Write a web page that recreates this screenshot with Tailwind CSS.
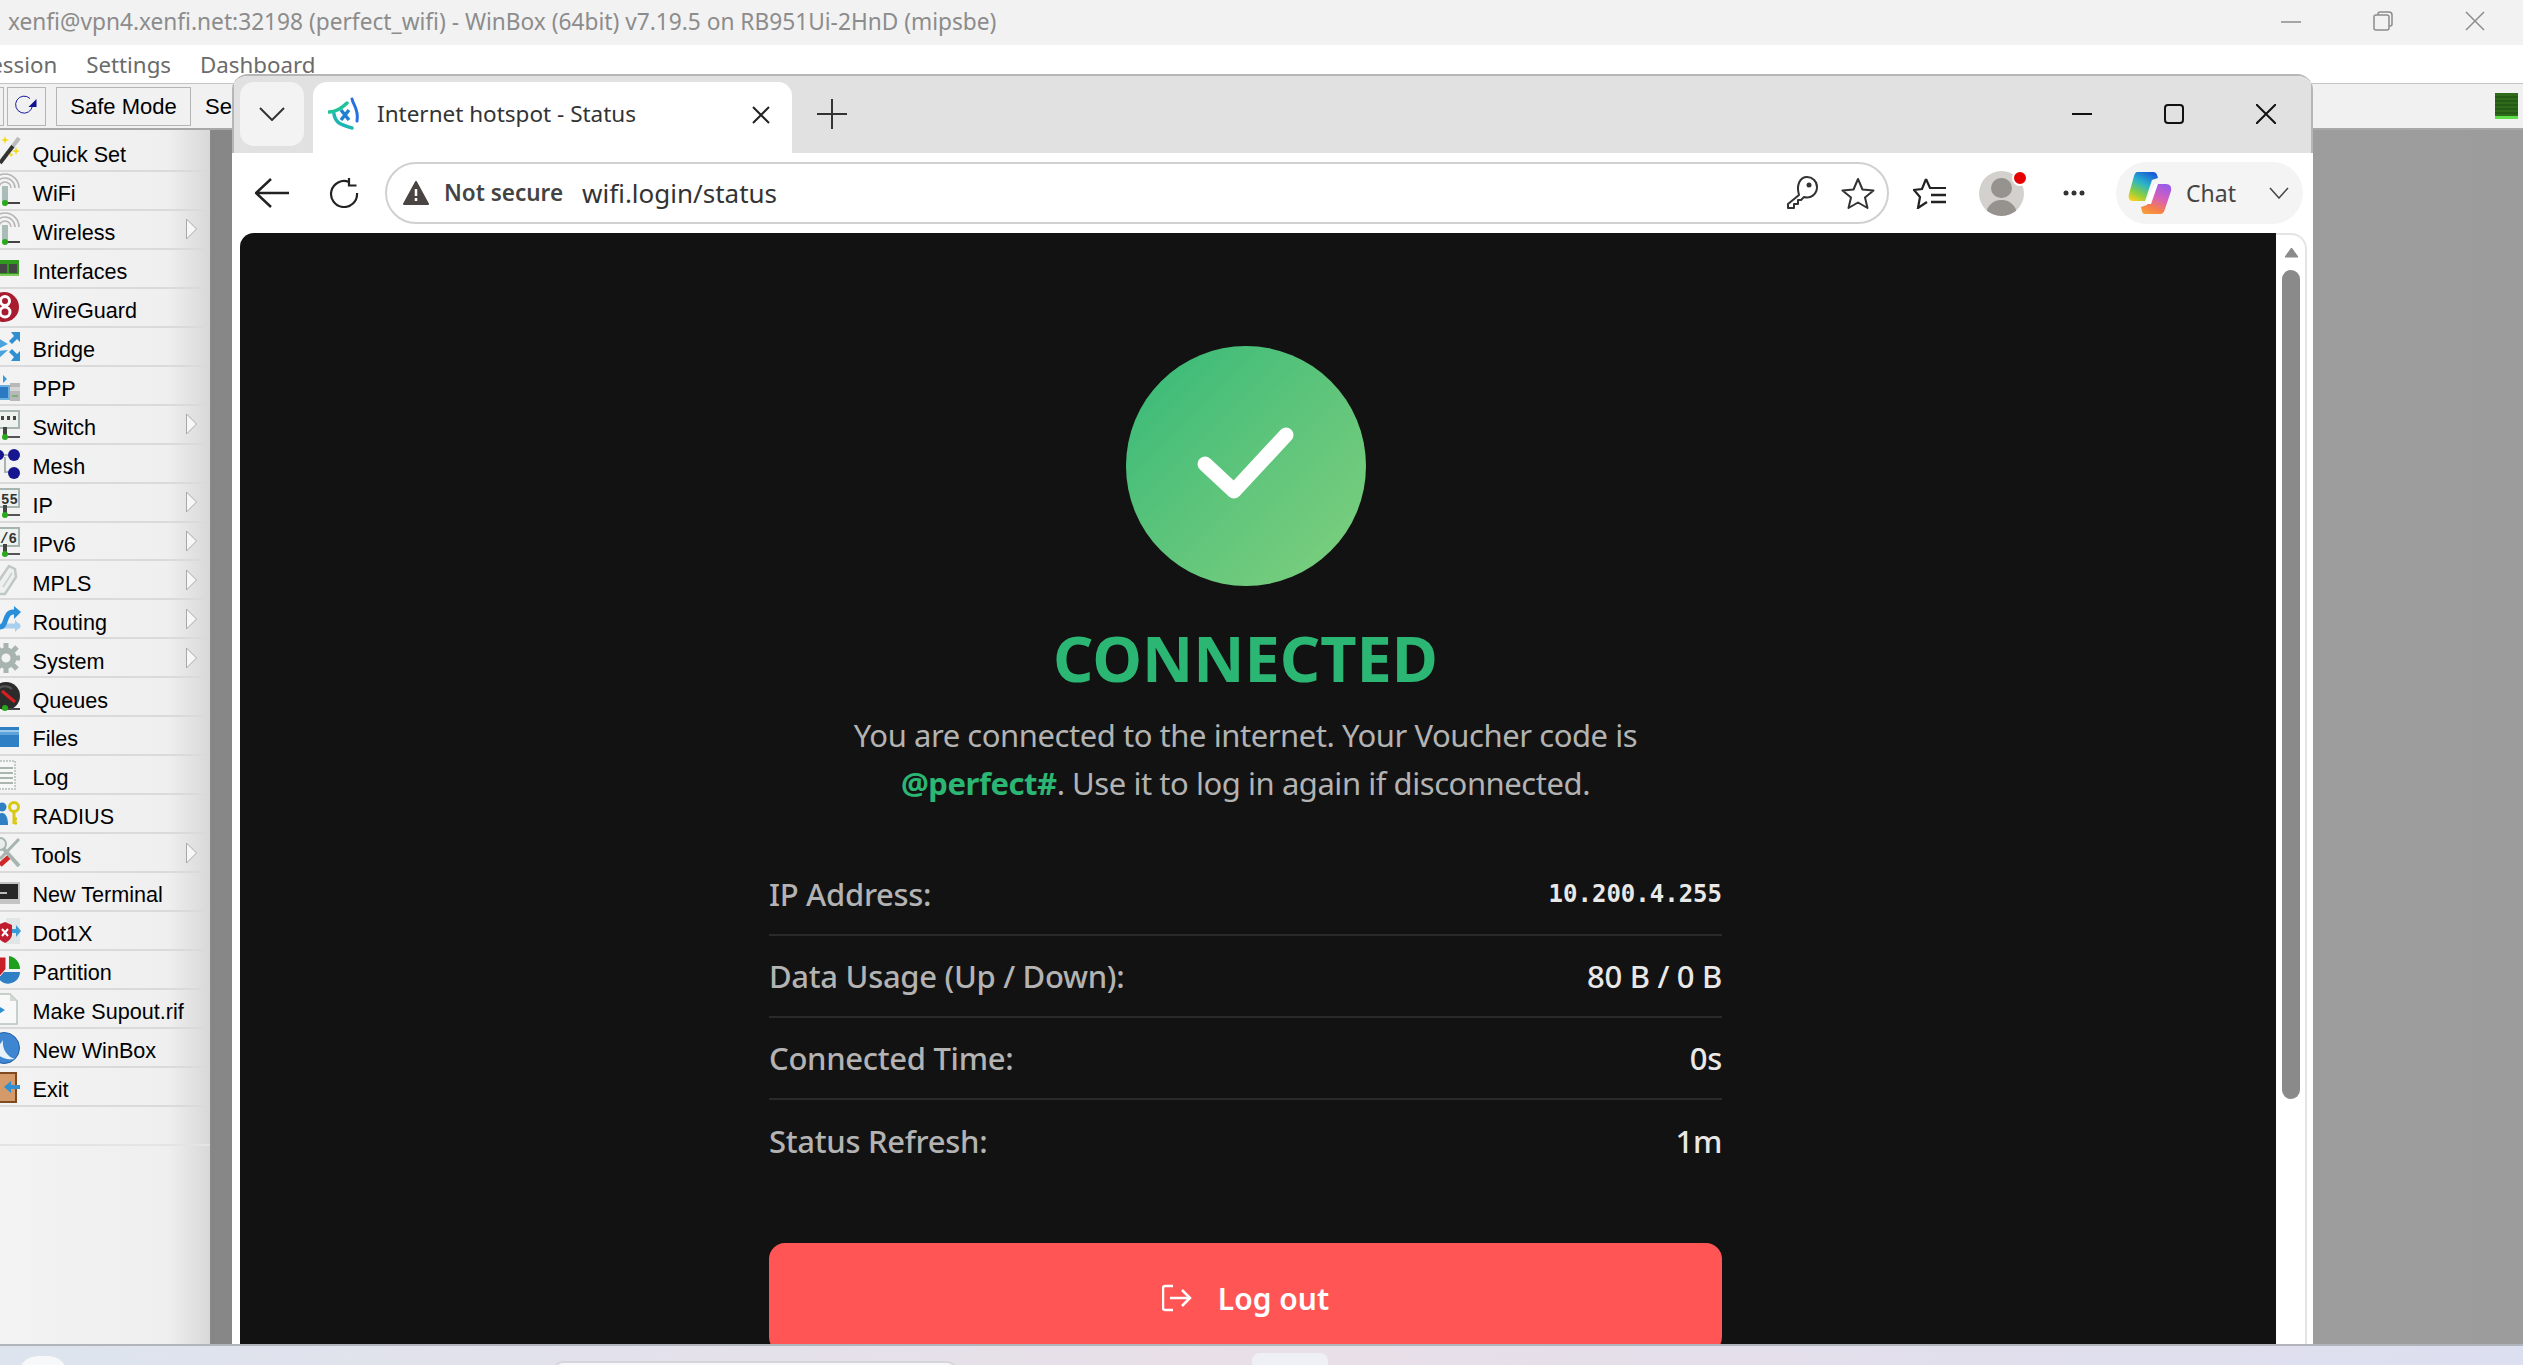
<!DOCTYPE html>
<html lang="en">
<head>
<meta charset="UTF-8">
<title>WinBox - Internet hotspot</title>
<script src="https://cdn.jsdelivr.net/npm/@tailwindcss/browser@4"></script>
</head>
<body class="relative h-[1365px] w-[2523px] overflow-hidden bg-[#dfe3ee] font-['Liberation_Sans',sans-serif]">

<svg class="hidden">
  <symbol id="sub" viewBox="0 0 11 22"><path d="M.5 1 10.5 11 .5 21Z" fill="#f7f7f7" stroke="#a8a8a8"/></symbol>
  <symbol id="stem" viewBox="0 0 22 39"><path d="M5 32H20" stroke="#555" stroke-width="2"/><path d="M3 22h4v9H3z" fill="#444"/><circle cx="5" cy="32" r="3" fill="#2aa81c"/></symbol>
</svg>

<!-- winbox window -->
<div class="flex h-[1344px] flex-col">
  <div class="flex h-[45px] items-center justify-between bg-[#f2f2f2] pl-[8px] font-['Noto_Sans',sans-serif] text-[22.7px] text-[#8c8c8c]">
    <span>xenfi@vpn4.xenfi.net:32198 (perfect_wifi) - WinBox (64bit) v7.19.5 on RB951Ui-2HnD (mipsbe)</span>
    <div class="-mt-[3px] flex items-center gap-[72px] pr-[38px]">
      <svg width="20" height="20" viewBox="0 0 20 20"><path d="M0 11H20" stroke="#8c8c8c" stroke-width="1.5"/></svg>
      <svg width="20" height="20" viewBox="0 0 20 20" fill="none" stroke="#8c8c8c" stroke-width="1.5"><rect x="1" y="4" width="15" height="15" rx="2"/><path d="M5 4V3a2 2 0 0 1 2-2h9a3 3 0 0 1 3 3v9a2 2 0 0 1-2 2h-1"/></svg>
      <svg width="20" height="20" viewBox="0 0 20 20"><path d="M1 1 19 19M19 1 1 19" stroke="#8c8c8c" stroke-width="1.5"/></svg>
    </div>
  </div>
  <div class="flex h-[39px] items-center gap-[29px] overflow-hidden border-b border-[#c4c4c4] bg-white pt-[2px] font-['Noto_Sans',sans-serif] text-[22.3px] text-[#6b6b6b]">
    <span class="-ml-[22px]">Session</span><span>Settings</span><span>Dashboard</span>
  </div>
  <div class="flex h-[46px] items-center justify-between border-b-2 border-[#a8a8a8] bg-[#f1f1f1] pr-[5px] text-[22px] text-black">
    <div class="flex items-center">
      <div class="h-[39px] w-[4px] border border-l-0 border-[#b5b5b5]"></div>
      <div class="ml-[3px] flex h-[39px] w-[39px] items-center justify-center border border-[#b5b5b5]">
        <svg width="24" height="24" viewBox="0 0 24 24"><path d="M15 4.500A8.500 8.500 0 1 0 17.500 12" fill="none" stroke="#1a1aa0" stroke-width="1"/><path d="M21.500 5V13H13.500Z" fill="#101090"/></svg>
      </div>
      <div class="ml-[10px] flex h-[39px] w-[135px] items-center justify-center border border-[#b5b5b5]">Safe Mode</div>
      <span class="ml-[14px]">Se</span>
    </div>
    <svg width="23" height="26" viewBox="0 0 23 26"><rect width="23" height="26" fill="#2f6a1a"/><path d="M0 4H23M0 8H23M0 12H23M0 16H23M0 20H23" stroke="#1d4a10"/><rect y="23" width="23" height="3" fill="#5fe04a"/></svg>
  </div>
  <div class="flex min-h-0 flex-1">
    <div class="h-full w-[211px] shrink-0 border-r border-[#8a8a8a] bg-linear-to-r from-[#f3f3f3] via-[#efefef] via-80% to-[#d8d8d8] pt-[3px] text-[21.6px] leading-none text-black">

      <div class="flex h-[38.96px] items-center border-b-2 border-[#dadada] pr-[13px]">
        <svg class="shrink-0" width="22" height="39" viewBox="0 0 22 39"><path d="M0 31 13 14" stroke="#333" stroke-width="4"/><path d="M13 14 19 6" stroke="#bbb" stroke-width="4"/><path d="M5 4l1 3 3 1-3 1-1 3-1-3-3-1 3-1zM16 15l1 3 3 1-3 1-1 3-1-3-3-1 3-1zM11 20l.7 2 2 .7-2 .7-.7 2-.7-2-2-.7 2-.7z" fill="#f2d90c"/></svg>
        <span class="ml-[10.5px] pt-[7px]">Quick Set</span>
      </div>
      <div class="flex h-[38.96px] items-center border-b-2 border-[#dadada] pr-[13px]">
        <svg class="shrink-0" width="22" height="39" viewBox="0 0 22 39"><g fill="none" stroke="#b5b5b5" stroke-width="1.5"><path d="M-1 17A6 6 0 0 1 11 17"/><path d="M-5 17A10 10 0 0 1 15 17"/><path d="M-9 17A14 14 0 0 1 19 17"/></g><path d="M2 15h6v16H2z" fill="#a8bdb8"/><path d="M5 32H20" stroke="#444" stroke-width="2"/><circle cx="5" cy="32" r="3" fill="#2aa81c"/></svg>
        <span class="ml-[10.5px] pt-[7px]">WiFi</span>
      </div>
      <div class="flex h-[38.96px] items-center border-b-2 border-[#dadada] pr-[13px]">
        <svg class="shrink-0" width="22" height="39" viewBox="0 0 22 39"><g fill="none" stroke="#b5b5b5" stroke-width="1.5"><path d="M-1 17A6 6 0 0 1 11 17"/><path d="M-5 17A10 10 0 0 1 15 17"/><path d="M-9 17A14 14 0 0 1 19 17"/></g><path d="M2 15h6v16H2z" fill="#a8bdb8"/><path d="M5 32H20" stroke="#444" stroke-width="2"/><circle cx="5" cy="32" r="3" fill="#2aa81c"/></svg>
        <span class="ml-[10.5px] pt-[7px]">Wireless</span>
        <svg class="ml-auto" width="11" height="22"><use href="#sub"/></svg>
      </div>
      <div class="flex h-[38.96px] items-center border-b-2 border-[#dadada] pr-[13px]">
        <svg class="shrink-0" width="22" height="39" viewBox="0 0 22 39"><rect x="-2" y="11" width="21" height="16" fill="#2f9a1e"/><rect x="-2" y="15" width="9" height="9" fill="#444"/><rect x="9" y="15" width="8" height="9" fill="#444"/><rect x="-2" y="25" width="21" height="2" fill="#7fc860"/></svg>
        <span class="ml-[10.5px] pt-[7px]">Interfaces</span>
      </div>
      <div class="flex h-[38.96px] items-center border-b-2 border-[#dadada] pr-[13px]">
        <svg class="shrink-0" width="22" height="39" viewBox="0 0 22 39"><circle cx="4" cy="19" r="15" fill="#a81c30"/><g fill="none" stroke="#fff" stroke-width="3"><circle cx="5" cy="13" r="4.5"/><circle cx="5" cy="24" r="5"/></g></svg>
        <span class="ml-[10.5px] pt-[7px]">WireGuard</span>
      </div>
      <div class="flex h-[38.96px] items-center border-b-2 border-[#dadada] pr-[13px]">
        <svg class="shrink-0" width="22" height="39" viewBox="0 0 22 39"><path d="M20 5v10l-3-3-5 5-3-3 5-5-3-4zM20 34V24l-3 3-5-5-3 3 5 5-3 4z" fill="#2f8fd0"/><path d="M-2 11 8 17 -2 22zM-2 24 8 23 -2 32z" fill="#4aa3dc"/></svg>
        <span class="ml-[10.5px] pt-[7px]">Bridge</span>
      </div>
      <div class="flex h-[38.96px] items-center border-b-2 border-[#dadada] pr-[13px]">
        <svg class="shrink-0" width="22" height="39" viewBox="0 0 22 39"><path d="M3 9 7 13 3 17z" fill="#3a9ad8"/><rect x="10" y="17" width="10" height="18" fill="#b8b8b8"/><rect x="10" y="21" width="10" height="4" fill="#d6d6d6"/><path d="M12 30h6" stroke="#3aa83a"/><rect x="-3" y="20" width="12" height="13" fill="#2b79c2" stroke="#6db0e0" stroke-width="2"/></svg>
        <span class="ml-[10.5px] pt-[7px]">PPP</span>
      </div>
      <div class="flex h-[38.96px] items-center border-b-2 border-[#dadada] pr-[13px]">
        <svg class="shrink-0" width="22" height="39" viewBox="0 0 22 39"><rect x="-3" y="6" width="22" height="17" fill="#eef2ee" stroke="#a6b5b0" stroke-width="2"/><path d="M1 11h3v4H1zM7 11h3v4H7zM13 11h3v4h-3z" fill="#444"/><use href="#stem" width="22" height="39"/></svg>
        <span class="ml-[10.5px] pt-[7px]">Switch</span>
        <svg class="ml-auto" width="11" height="22"><use href="#sub"/></svg>
      </div>
      <div class="flex h-[38.96px] items-center border-b-2 border-[#dadada] pr-[13px]">
        <svg class="shrink-0" width="22" height="39" viewBox="0 0 22 39"><path d="M0 11H8M5 13V28H9" fill="none" stroke="#a6b5b0" stroke-width="2"/><circle cx="-1" cy="11" r="5" fill="#161690"/><circle cx="14" cy="11" r="6" fill="#161690"/><circle cx="14" cy="29" r="6" fill="#161690"/></svg>
        <span class="ml-[10.5px] pt-[7px]">Mesh</span>
      </div>
      <div class="flex h-[38.96px] items-center border-b-2 border-[#dadada] pr-[13px]">
        <svg class="shrink-0" width="22" height="39" viewBox="0 0 22 39"><rect x="-3" y="6" width="22" height="18" fill="#eef2ee" stroke="#a6b5b0" stroke-width="2"/><text x="1" y="21" font-family="Liberation Mono" font-size="14" font-weight="700" fill="#333">55</text><use href="#stem" width="22" height="39"/></svg>
        <span class="ml-[10.5px] pt-[7px]">IP</span>
        <svg class="ml-auto" width="11" height="22"><use href="#sub"/></svg>
      </div>
      <div class="flex h-[38.96px] items-center border-b-2 border-[#dadada] pr-[13px]">
        <svg class="shrink-0" width="22" height="39" viewBox="0 0 22 39"><rect x="-3" y="6" width="22" height="18" fill="#eef2ee" stroke="#a6b5b0" stroke-width="2"/><text x="0" y="21" font-family="Liberation Mono" font-size="14" font-weight="700" fill="#333">/6</text><use href="#stem" width="22" height="39"/></svg>
        <span class="ml-[10.5px] pt-[7px]">IPv6</span>
        <svg class="ml-auto" width="11" height="22"><use href="#sub"/></svg>
      </div>
      <div class="flex h-[38.96px] items-center border-b-2 border-[#dadada] pr-[13px]">
        <svg class="shrink-0" width="22" height="39" viewBox="0 0 22 39"><path d="M9 6 15 9 16 17 5 34-3 34-6 28Z" fill="#eef0ef" stroke="#c0c8c4" stroke-width="2.500"/><path d="M3 27 12 13" stroke="#c8cfcc" stroke-width="1.5"/></svg>
        <span class="ml-[10.5px] pt-[7px]">MPLS</span>
        <svg class="ml-auto" width="11" height="22"><use href="#sub"/></svg>
      </div>
      <div class="flex h-[38.96px] items-center border-b-2 border-[#dadada] pr-[13px]">
        <svg class="shrink-0" width="22" height="39" viewBox="0 0 22 39"><path d="M0 27H9L20 27" fill="none" stroke="#a8d0ee" stroke-width="5"/><path d="M15 21l6 6-6 6z" fill="#a8d0ee"/><path d="M0 28C7 28 4 13 13 13h3" fill="none" stroke="#2b8ed8" stroke-width="5"/><path d="M14 7l7 6-7 7z" fill="#2b8ed8"/></svg>
        <span class="ml-[10.5px] pt-[7px]">Routing</span>
        <svg class="ml-auto" width="11" height="22"><use href="#sub"/></svg>
      </div>
      <div class="flex h-[38.96px] items-center border-b-2 border-[#dadada] pr-[13px]">
        <svg class="shrink-0" width="22" height="39" viewBox="0 0 22 39"><circle cx="6" cy="20" r="7.5" fill="none" stroke="#a8b4b0" stroke-width="6"/><path d="M6 5V10M6 30V35M-9 20H-4M16 20H20M17 9 13 13M17 31 13 27M-3 9 0 13M-3 31 0 27" stroke="#a8b4b0" stroke-width="5"/></svg>
        <span class="ml-[10.5px] pt-[7px]">System</span>
        <svg class="ml-auto" width="11" height="22"><use href="#sub"/></svg>
      </div>
      <div class="flex h-[38.96px] items-center border-b-2 border-[#dadada] pr-[13px]">
        <svg class="shrink-0" width="22" height="39" viewBox="0 0 22 39"><circle cx="6" cy="19" r="14" fill="#2b2b2b"/><path d="M2 14 15 25" stroke="#d81e1e" stroke-width="3"/><path d="M-2 12a10 10 0 0 1 14 0" fill="none" stroke="#555" stroke-width="2"/><path d="M5 32H20" stroke="#444" stroke-width="2"/><circle cx="5" cy="31" r="3" fill="#2aa81c"/></svg>
        <span class="ml-[10.5px] pt-[7px]">Queues</span>
      </div>
      <div class="flex h-[38.96px] items-center border-b-2 border-[#dadada] pr-[13px]">
        <svg class="shrink-0" width="22" height="39" viewBox="0 0 22 39"><path d="M-2 11h21v20H-2z" fill="#2f7fc4"/><path d="M-2 14h21v2H-2z" fill="#9cc9ea"/><path d="M-2 16h21v3H-2z" fill="#5ea4dc"/></svg>
        <span class="ml-[10.5px] pt-[7px]">Files</span>
      </div>
      <div class="flex h-[38.96px] items-center border-b-2 border-[#dadada] pr-[13px]">
        <svg class="shrink-0" width="22" height="39" viewBox="0 0 22 39"><rect x="-3" y="6" width="18" height="28" fill="#f6f7f6" stroke="#c2cbc6" stroke-width="2" stroke-dasharray="2 1"/><path d="M0 13H13M0 18H13M0 23H13M0 28H13" stroke="#aab5b0" stroke-width="2"/></svg>
        <span class="ml-[10.5px] pt-[7px]">Log</span>
      </div>
      <div class="flex h-[38.96px] items-center border-b-2 border-[#dadada] pr-[13px]">
        <svg class="shrink-0" width="22" height="39" viewBox="0 0 22 39"><circle cx="2" cy="13" r="4.5" fill="#2f7fc4"/><path d="M-4 31c0-9 3-12 6-12s6 3 6 12z" fill="#2f7fc4"/><circle cx="14" cy="13" r="4.5" fill="none" stroke="#d8c814" stroke-width="3"/><path d="M14 17V30M14 25h3M14 29h3" stroke="#d8c814" stroke-width="3"/></svg>
        <span class="ml-[10.5px] pt-[7px]">RADIUS</span>
      </div>
      <div class="flex h-[38.96px] items-center border-b-2 border-[#dadada] pr-[13px]">
        <svg class="shrink-0" width="22" height="39" viewBox="0 0 22 39"><path d="M19 6 0 26" stroke="#a8b4b0" stroke-width="3"/><path d="M10 23 0 32" stroke="#d02828" stroke-width="5"/><path d="M2 14 19 33" stroke="#a8b4b0" stroke-width="4"/><circle cx="0" cy="11" r="6" fill="#e8eeee" stroke="#a8b4b0" stroke-width="2"/></svg>
        <span class="ml-[9px] pt-[7px]">Tools</span>
        <svg class="ml-auto" width="11" height="22"><use href="#sub"/></svg>
      </div>
      <div class="flex h-[38.96px] items-center border-b-2 border-[#dadada] pr-[13px]">
        <svg class="shrink-0" width="22" height="39" viewBox="0 0 22 39"><rect x="-2" y="10" width="22" height="22" fill="#c4c4c4"/><rect x="-2" y="12" width="20" height="15" fill="#262626"/><path d="M0 21H7" stroke="#eee" stroke-width="1.5"/></svg>
        <span class="ml-[10.5px] pt-[7px]">New Terminal</span>
      </div>
      <div class="flex h-[38.96px] items-center border-b-2 border-[#dadada] pr-[13px]">
        <svg class="shrink-0" width="22" height="39" viewBox="0 0 22 39"><rect x="6" y="7" width="14" height="26" fill="#e0e6e6"/><path d="M9 18h7v-4l5 6-5 6v-4H9z" fill="#3a9ad8"/><path d="M-3 14 5 11l7 3v9c0 4-3 7-7 9-4-2-8-5-8-9z" fill="#c01e30"/><path d="M2 18 8 25M8 18 2 25" stroke="#fff" stroke-width="2"/></svg>
        <span class="ml-[10.5px] pt-[7px]">Dot1X</span>
      </div>
      <div class="flex h-[38.96px] items-center border-b-2 border-[#dadada] pr-[13px]">
        <svg class="shrink-0" width="22" height="39" viewBox="0 0 22 39"><path d="M9 6a13 13 0 0 1 11 13H9z" fill="#1ea01e"/><path d="M-3 22H20A12 12 0 0 1 4 33 12 12 0 0 1-3 22z" fill="#2f7fc4"/><path d="M-3 7H6V19L0 26H-3z" fill="#c81e28" stroke="#f3f3f3"/></svg>
        <span class="ml-[10.5px] pt-[7px]">Partition</span>
      </div>
      <div class="flex h-[38.96px] items-center border-b-2 border-[#dadada] pr-[13px]">
        <svg class="shrink-0" width="22" height="39" viewBox="0 0 22 39"><path d="M-3 5H10L17 12V35H-3z" fill="#f8f8f8" stroke="#b6c2bc" stroke-width="1.5"/><path d="M10 5v7h7z" fill="#d2d9d5"/><path d="M-3 16 5 21-3 26z" fill="#2f8fd0"/></svg>
        <span class="ml-[10.5px] pt-[7px]">Make Supout.rif</span>
      </div>
      <div class="flex h-[38.96px] items-center border-b-2 border-[#dadada] pr-[13px]">
        <svg class="shrink-0" width="22" height="39" viewBox="0 0 22 39"><circle cx="4" cy="20" r="15.500" fill="#3f86d2" stroke="#2160a8" stroke-width="1"/><path d="M-8 22C0 30 8 32 15 31 6 28 2 20 3 12-1 18-4 22-8 22Z" fill="#e8f2fb"/></svg>
        <span class="ml-[10.5px] pt-[7px]">New WinBox</span>
      </div>
      <div class="flex h-[38.96px] items-center border-b-2 border-[#dadada] pr-[13px]">
        <svg class="shrink-0" width="22" height="39" viewBox="0 0 22 39"><rect x="-3" y="6" width="19" height="29" fill="#d49a6a" stroke="#7d4a22" stroke-width="2"/><path d="M20 18v4H11v-4zM11 14v12l-7-6z" fill="#2f8fd0"/></svg>
        <span class="ml-[10.5px] pt-[7px]">Exit</span>
      </div>
      <div class="h-[38.96px] border-b-2 border-[#e4e4e4]"></div>
    </div>
    <div class="flex-1 bg-linear-to-r from-[#868686] via-[#a0a0a0] via-[20%] to-[#9c9c9c]"></div>
  </div>
</div>

<!-- browser window on top of winbox -->
<div class="absolute left-[232px] top-[74px] flex h-[1270px] w-[2081px] flex-col overflow-hidden rounded-t-[16px] border-t-2 border-[#b6b6b6] bg-white font-['Noto_Sans',sans-serif]">
  <div class="flex h-[77px] shrink-0 items-end border-x-2 border-[#b6b6b6] bg-[#e1e1e1] pl-[6px]">
    <div class="mb-[7px] flex h-[64px] w-[64px] items-center justify-center rounded-[14px] bg-[#f3f3f3]">
      <svg width="26" height="14" viewBox="0 0 26 14"><path d="M1 1 13 13 25 1" fill="none" stroke="#333" stroke-width="2"/></svg>
    </div>
    <div class="ml-[9px] flex h-[71px] w-[479px] items-start rounded-t-[14px] bg-white pl-[15px] pr-[22px] pt-[15px]">
      <svg width="34" height="34" viewBox="0 0 34 34" fill="none"><path d="M1 15C6 15 13 12 19 6" stroke="#1fc49a" stroke-width="3.500" stroke-linecap="round"/><path d="M6 17C7 26 14 28 24 31" stroke="#1fb5b5" stroke-width="3.500" stroke-linecap="round"/><path d="M24 2C25 8 31 12 29 24" stroke="#2a6fe0" stroke-width="3" stroke-linecap="round"/><path d="M13 13 21 23M21 13 13 23" stroke="#1f7fd0" stroke-width="3.500"/></svg>
      <span class="ml-[15px] text-[22.5px] leading-[34px] text-[#333]">Internet hotspot - Status</span>
      <svg class="ml-auto mt-[9px]" width="18" height="18" viewBox="0 0 18 18"><path d="M1 1 17 17M17 1 1 17" stroke="#222" stroke-width="2"/></svg>
    </div>
    <svg class="mb-[24px] ml-[25px]" width="30" height="30" viewBox="0 0 30 30"><path d="M15 0V30M0 15H30" stroke="#333" stroke-width="2"/></svg>
    <div class="mb-[29px] ml-auto mr-[35px] flex items-center gap-[72px]">
      <svg width="20" height="20" viewBox="0 0 20 20"><path d="M0 10H20" stroke="#111" stroke-width="2"/></svg>
      <svg width="20" height="20" viewBox="0 0 20 20"><rect x="1" y="1" width="18" height="18" rx="3" fill="none" stroke="#111" stroke-width="2"/></svg>
      <svg width="20" height="20" viewBox="0 0 20 20"><path d="M0 0 20 20M20 0 0 20" stroke="#111" stroke-width="2"/></svg>
    </div>
  </div>
  <div class="flex h-[80px] shrink-0 items-center bg-white pl-[23px] pr-[10px]">
    <svg width="34" height="30" viewBox="0 0 34 30"><path d="M16 1 1 15 16 29M1 15H34" fill="none" stroke="#222" stroke-width="2.500"/></svg>
    <svg class="ml-[40px]" width="30" height="30" viewBox="0 0 30 30" fill="none"><path d="M20 4A13 13 0 1 0 28 15" stroke="#222" stroke-width="2.200"/><path d="M20 0V7.500H27.500" stroke="#222" stroke-width="2.200"/></svg>
    <div class="ml-[26px] flex h-[62px] w-[1504px] items-center rounded-full border-2 border-[#d0d0d0] pl-[16px] pr-[12px]">
      <svg width="26" height="24" viewBox="0 0 26 24"><path d="M13 1 25 23H1Z" fill="#4a4543" stroke="#4a4543" stroke-width="2" stroke-linejoin="round"/><path d="M13 8V15M13 17V20" stroke="#fff" stroke-width="2.500"/></svg>
      <span class="ml-[15px] text-[22.5px] font-semibold text-[#444]">Not secure</span>
      <span class="ml-[19px] text-[26px] text-[#333]">wifi.login/status</span>
      <svg class="ml-auto" width="34" height="34" viewBox="0 0 34 34" fill="none"><path d="M14 19 3 28V32H9V28H13V24H16L19 21C26 23 32 18 32 11 32 5 27 1 22 1 15 1 11 9 14 19Z" stroke="#333" stroke-width="2" stroke-linejoin="round"/><circle cx="24" cy="9" r="2.500" fill="#333"/></svg>
      <svg class="ml-[22px]" width="34" height="32" viewBox="0 0 34 32"><path d="M17 2 21.500 12.500 32.500 13.500 24 20.500 26.500 31 17 25.500 7.500 31 10 20.500 1.500 13.500 12.500 12.500Z" fill="none" stroke="#333" stroke-width="2" stroke-linejoin="round"/></svg>
    </div>
    <svg class="ml-[24px]" width="34" height="32" viewBox="0 0 34 32" fill="none" stroke="#222" stroke-width="2.200"><path d="M13 2 9 12 1 13 7 20 5 31 14 25"/><path d="M13 2 17 11 H33"/><path d="M18 18H33M18 25H33" stroke-width="2.500"/></svg>
    <div class="relative ml-[32px] h-[45px] w-[45px] overflow-hidden rounded-full bg-[#d3d1cd]">
      <div class="absolute left-[12px] top-[7px] h-[20px] w-[21px] rounded-full bg-[#96928e]"></div>
      <div class="absolute left-[7px] top-[29px] h-[30px] w-[31px] rounded-full bg-[#96928e]"></div>
    </div>
    <div class="relative -ml-[12px] -mt-[31px] h-[16px] w-[16px] rounded-full border-2 border-white bg-[#e60000]"></div>
    <svg class="ml-[35px]" width="22" height="6" viewBox="0 0 22 6"><circle cx="3" cy="3" r="2.500" fill="#333"/><circle cx="11" cy="3" r="2.500" fill="#333"/><circle cx="19" cy="3" r="2.500" fill="#333"/></svg>
    <div class="ml-[31px] flex h-[62px] w-[187px] items-center rounded-full bg-[#f4f4f4] pl-[12px] pr-[14px]">
      <svg width="44" height="42" viewBox="0 0 44 42">
        <defs>
          <linearGradient id="cpa" x1="0.700" y1="0" x2="0.200" y2="1"><stop offset="0" stop-color="#1a5fd8"/><stop offset=".4" stop-color="#2ab5c8"/><stop offset=".75" stop-color="#8ccf3c"/><stop offset="1" stop-color="#f5d020"/></linearGradient>
          <linearGradient id="cpb" x1="0.700" y1="0" x2="0.300" y2="1"><stop offset="0" stop-color="#9a5be8"/><stop offset=".45" stop-color="#d860b8"/><stop offset=".8" stop-color="#f5804a"/><stop offset="1" stop-color="#f79a3a"/></linearGradient>
        </defs>
        <path d="M9 0H25C28 0 29 2 30 6L24 8 17 29H5C1 29 0 26 1 22L6 4C7 1 8 0 9 0Z" fill="url(#cpa)"/>
        <path d="M26 12H38C42 12 44 15 43 19L37 37C36 40 35 42 32 42H17C14 42 14 39 13 35L19 33Z" fill="url(#cpb)"/>
        <path d="M26 12H30L23 32H17Z" fill="#fff"/>
      </svg>
      <span class="ml-[14px] text-[23px] text-[#444]">Chat</span>
      <svg class="ml-auto" width="20" height="12" viewBox="0 0 20 12"><path d="M1 1 10 11 19 1" fill="none" stroke="#444" stroke-width="1.500"/></svg>
    </div>
  </div>

  <div class="flex min-h-0 flex-1 pl-[8px] pr-[6px]">
    <!-- portal page -->
    <div class="flex min-w-0 flex-1 flex-col items-center overflow-hidden rounded-tl-[14px] bg-[#121212] pr-[25px] pt-[113px]">
      <div class="flex h-[240px] w-[240px] shrink-0 items-center justify-center rounded-full bg-linear-to-br from-[#2fb978] to-[#7fd07e]">
        <svg width="100" height="84" viewBox="0 0 100 84"><path d="M9 40 38 67 90 11" fill="none" stroke="#fff" stroke-width="15" stroke-linecap="round" stroke-linejoin="round"/></svg>
      </div>
      <h1 class="mt-[28px] text-[63px] font-bold leading-[88px] text-[#2bb673]">CONNECTED</h1>
      <p class="mt-[9px] text-center text-[31px] leading-[48px] tracking-[-0.45px] text-[#b3b3b3]">You are connected to the internet. Your Voucher code is<br><b class="font-bold text-[#2bb673]">@perfect#</b>. Use it to log in again if disconnected.</p>
      <div class="mt-[47px] w-[953px] text-[31px] font-medium tracking-[-0.3px] text-[#b3b3b3]">
        <div class="flex h-[82px] items-center justify-between border-b-2 border-[#2a2a2a]"><span>IP Address:</span><span class="font-['DejaVu_Sans_Mono',monospace] text-[24px] font-bold tracking-normal text-[#e8e8e8]">10.200.4.255</span></div>
        <div class="flex h-[82px] items-center justify-between border-b-2 border-[#2a2a2a]"><span>Data Usage (Up / Down):</span><span class="text-[#e8e8e8]">80 B / 0 B</span></div>
        <div class="flex h-[82px] items-center justify-between border-b-2 border-[#2a2a2a]"><span>Connected Time:</span><span class="text-[#e8e8e8]">0s</span></div>
        <div class="flex h-[82px] items-center justify-between"><span>Status Refresh:</span><span class="text-[#e8e8e8]">1m</span></div>
      </div>
      <button class="mt-[61px] flex h-[110px] w-[953px] shrink-0 items-center justify-center gap-[26px] rounded-[16px] bg-[#ff5555] text-[30px] font-semibold text-white">
        <svg width="30" height="28" viewBox="0 0 30 28" fill="none" stroke="#fff" stroke-width="2.500"><path d="M11 2H3a2 2 0 0 0-2 2v20a2 2 0 0 0 2 2h8"/><path d="M8 14H28M20 6l8 8-8 8"/></svg>
        Log out
      </button>
    </div>
    <!-- scrollbar -->
    <div class="relative w-[31px] shrink-0 rounded-tr-[16px] border-r-2 border-t-2 border-[#e4e4e4] bg-white">
      <svg class="absolute left-[8px] top-[12px]" width="15" height="11" viewBox="0 0 15 11"><path d="M7.500 1 14 10H1Z" fill="#8a8a8a" stroke="#8a8a8a" stroke-linejoin="round"/></svg>
      <div class="absolute left-[6px] top-[35px] h-[829px] w-[18px] rounded-full bg-[#8a8a8a]"></div>
    </div>
  </div>
</div>

<!-- taskbar edge -->
<div class="absolute bottom-0 left-0 h-[21px] w-full overflow-hidden border-t-2 border-[#b1b4ba] bg-linear-to-r from-[#dde4ee] via-[#e9dfe8] to-[#dcdff0]">
  <div class="absolute left-[18px] top-[10px] h-[20px] w-[50px] rounded-t-full bg-[#f7f8fa]"></div>
  <div class="absolute left-[553px] top-[15px] h-[20px] w-[404px] rounded-t-[10px] border-2 border-[#d5d5da] bg-[#f8f8fa]"></div>
  <div class="absolute left-[1252px] top-[7px] h-[20px] w-[76px] rounded-t-[8px] bg-[#eff0f6]"></div>
</div>

</body>
</html>
